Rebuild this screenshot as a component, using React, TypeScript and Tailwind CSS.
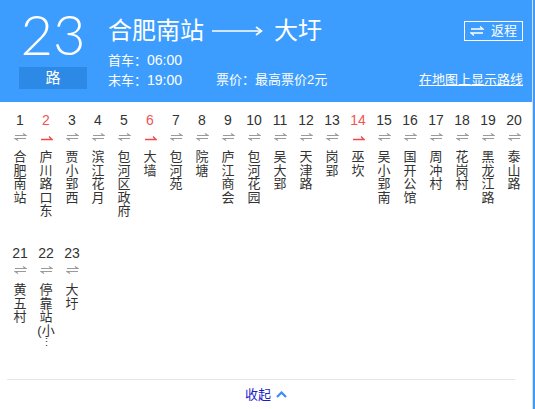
import React from 'react';

const stops = [
  { n: 1, name: ['合', '肥', '南', '站'] },
  { n: 2, name: ['庐', '川', '路', '口', '东'], red: true },
  { n: 3, name: ['贾', '小', '郢', '西'] },
  { n: 4, name: ['滨', '江', '花', '月'] },
  { n: 5, name: ['包', '河', '区', '政', '府'] },
  { n: 6, name: ['大', '墙'], red: true },
  { n: 7, name: ['包', '河', '苑'] },
  { n: 8, name: ['院', '塘'] },
  { n: 9, name: ['庐', '江', '商', '会'] },
  { n: 10, name: ['包', '河', '花', '园'] },
  { n: 11, name: ['吴', '大', '郢'] },
  { n: 12, name: ['天', '津', '路'] },
  { n: 13, name: ['岗', '郢'] },
  { n: 14, name: ['巫', '坎'], red: true },
  { n: 15, name: ['吴', '小', '郢', '南'] },
  { n: 16, name: ['国', '开', '公', '馆'] },
  { n: 17, name: ['周', '冲', '村'] },
  { n: 18, name: ['花', '岗', '村'] },
  { n: 19, name: ['黑', '龙', '江', '路'] },
  { n: 20, name: ['泰', '山', '路'] },
  { n: 21, name: ['黄', '五', '村'] },
  { n: 22, name: ['停', '靠', '站', '(小'], more: true },
  { n: 23, name: ['大', '圩'] },
];

const font = { fontFamily: '"Liberation Sans", "Noto Sans CJK SC", sans-serif' };

function BothWays() {
  return (
    <svg width="13" height="8" viewBox="0 0 13 8" fill="none" stroke="#9a9a9a" strokeWidth="1.2">
      <path d="M1 2.5H12L9 0.5" />
      <path d="M12 5.5H1L4 7.5" />
    </svg>
  );
}

function OneWay() {
  return (
    <svg width="13" height="8" viewBox="0 0 13 8" fill="none" stroke="#f04848" strokeWidth="1.3">
      <path d="M1 6.5H12L9 3.5" />
    </svg>
  );
}

export default function App() {
  return (
    <div className="flex w-[535px] bg-[#3c9dfe]" style={font}>
      <div className="w-[533px] bg-white border-r border-[#dcdcdc]">
        {/* header */}
        <div className="flex h-[102px] bg-[#3c9dfe] text-white">
          <div className="ml-[19px] w-[68px] flex flex-col items-center">
            <div
              className="mt-[1px] h-[60px] text-[56px] leading-[66px]"
              style={{ fontFamily: 'Lato, "Noto Sans", sans-serif', fontWeight: 300 }}
            >
              23
            </div>
            <div className="mt-[6px] w-[68px] h-[22px] bg-[#2d89e6] text-[15px] leading-[22px] text-center">路</div>
          </div>
          <div className="ml-[21px] mr-[9px] flex-1 flex flex-col">
            <div className="flex justify-between items-start mt-[16px]">
              <div className="flex items-center text-[24px] leading-[30px]">
                <span>合肥南站</span>
                <svg className="ml-[8px] mr-[11px]" width="51" height="10" viewBox="0 0 51 10" fill="none" stroke="white" strokeWidth="1.6">
                  <path d="M0 5H49" />
                  <path d="M44 1L49.5 5L44 9" />
                </svg>
                <span>大圩</span>
              </div>
              <div className="mt-[5px] flex items-center h-[20px] px-[5px] border border-white text-[13px]">
                <svg width="14" height="10" viewBox="0 0 14 10" fill="none" stroke="white" strokeWidth="1.3">
                  <path d="M1 3H13L10 0.5" />
                  <path d="M13 7H1L4 9.5" />
                </svg>
                <span className="ml-[7px]">返程</span>
              </div>
            </div>
            <div className="mt-[5px] text-[13px] leading-[18px]">首车：<span className="text-[14px]">06:00</span></div>
            <div className="mt-[1px] flex text-[13px] leading-[18px]">
              <span className="w-[108px]">末车：<span className="text-[14px]">19:00</span></span>
              <span>票价：最高票价2元</span>
              <span className="ml-auto underline">在地图上显示路线</span>
            </div>
          </div>
        </div>

        {/* stops */}
        <div className="grid grid-cols-[repeat(20,26px)] pl-[7px]">
          {stops.map((s) => (
            <div key={s.n} className="h-[133px] pt-[10px] flex flex-col items-center">
              <div className={`text-[14px] leading-[16px] ${s.red ? 'text-[#f25353]' : 'text-[#333]'}`}>{s.n}</div>
              <div className="mt-[5px] h-[8px] flex items-center">
                {s.red ? <OneWay /> : <BothWays />}
              </div>
              <div className="mt-[9px] text-[13px] leading-[13.6px] text-[#333] flex flex-col items-center">
                {s.name.map((c, i) => (
                  <span key={i} className="whitespace-nowrap">{c}</span>
                ))}
                {s.more && <span className="leading-[10px] text-[11px]">⋮</span>}
              </div>
            </div>
          ))}
        </div>

        {/* footer */}
        <div className="mt-[11px] ml-[7px] w-[508px] border-t border-[#e6e6e6]"></div>
        <div className="h-[29px] flex items-center justify-center text-[13px] text-[#1c1dc9]">
          <span>收起</span>
          <svg className="ml-[5px]" width="11" height="7" viewBox="0 0 11 7" fill="none" stroke="#3d8df5" strokeWidth="2.2">
            <path d="M1 6L5.5 1.5L10 6" />
          </svg>
        </div>
      </div>
    </div>
  );
}
